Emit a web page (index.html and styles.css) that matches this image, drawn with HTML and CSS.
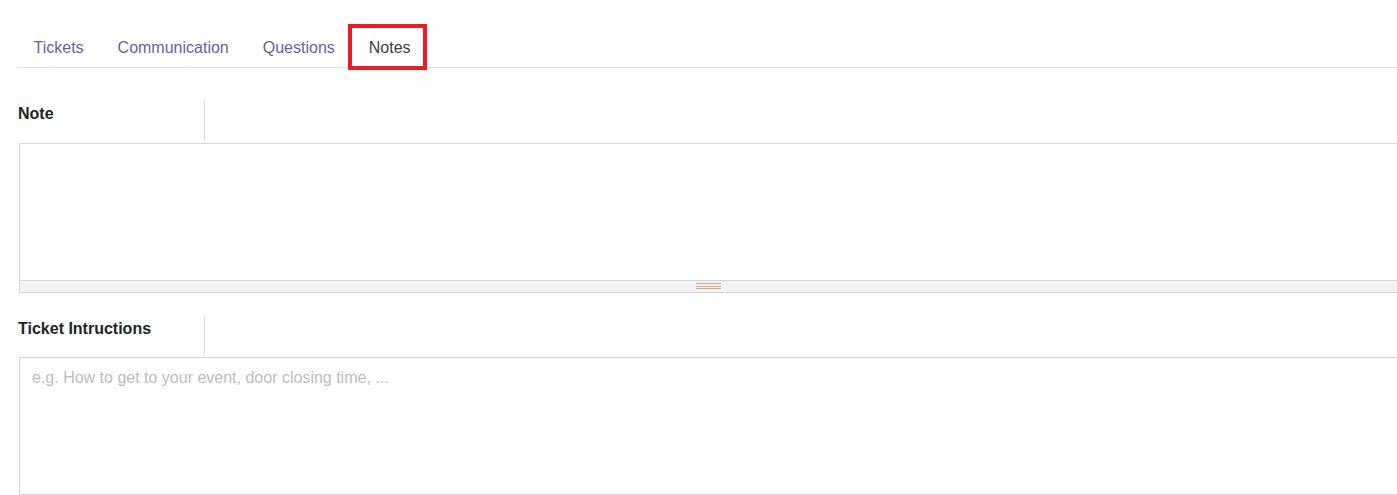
FILE: index.html
```html
<!DOCTYPE html>
<html lang="en">
<head>
    <meta charset="UTF-8">
    <meta name="viewport" content="width=device-width, initial-scale=1.0">
    <title>Event - Notes</title>
    <link rel="stylesheet" href="styles.css">
</head>
<body>
    <div class="sheet">
        <ul class="tabs">
            <li><a href="#">Tickets</a></li>
            <li><a href="#">Communication</a></li>
            <li><a href="#">Questions</a></li>
            <li class="active"><a href="#">Notes</a></li>
        </ul>
        <div class="highlight"></div>

        <div class="field-row">
            <label class="field-label">Note</label>
            <div class="field-sep"></div>
        </div>
        <div class="editor">
            <div class="editor-body"></div>
            <div class="editor-status">
                <span class="grip"></span>
            </div>
        </div>

        <div class="field-row second">
            <label class="field-label">Ticket Intructions</label>
            <div class="field-sep"></div>
        </div>
        <div class="text-box">
            <span class="placeholder">e.g. How to get to your event, door closing time, ...</span>
        </div>
    </div>
</body>
</html>
```

FILE: styles.css
```css
body {
    margin: 0;
    font-family: "Liberation Sans", Arial, sans-serif;
    font-size: 16px;
    color: #212529;
    background-color: #fff;
    overflow: hidden;
}
.sheet {
    position: relative;
    padding: 28px 0 0 17px;
}
.tabs {
    display: flex;
    list-style: none;
    margin: 0;
    padding: 0;
    border-bottom: 1px solid #dee2e6;
}
.tabs a {
    display: block;
    padding: 10px 16.5px;
    line-height: 19px;
    color: #6c5fa0;
    text-decoration: none;
}
.tabs li + li a {
    padding-left: 17.5px;
}
.tabs .active a {
    color: #3d3d45;
}
.highlight {
    position: absolute;
    left: 348px;
    top: 24px;
    width: 71px;
    height: 38px;
    border: 4px solid #ed1c24;
}
.field-row {
    display: flex;
    height: 41px;
    margin-top: 32px;
}
.field-row.second {
    margin-top: 22px;
    height: 40px;
}
.field-label {
    width: 186px;
    padding: 4px 0 0 1px;
    line-height: 19px;
    font-weight: bold;
}
.field-sep {
    width: 1px;
    background-color: #dcdcdc;
}
.editor {
    width: 1400px;
    margin: 2px 0 0 2px;
    border: 1px solid #d6d6d6;
}
.editor-body {
    height: 136px;
}
.editor-status {
    display: flex;
    justify-content: center;
    height: 11px;
    background-color: #f3f3f3;
    border-top: 1px solid #d6d6d6;
}
.grip {
    width: 25px;
    height: 6px;
    margin: 2px 0 0 -24px;
    background: repeating-linear-gradient(to bottom, #d2a887 0 1px, transparent 1px 2.5px);
}
.text-box {
    width: 1400px;
    height: 116px;
    margin: 2px 0 0 2px;
    padding: 10px 12px;
    border: 1px solid #d6d6d6;
    line-height: 20px;
}
.placeholder {
    color: #bdbdbd;
}
```
